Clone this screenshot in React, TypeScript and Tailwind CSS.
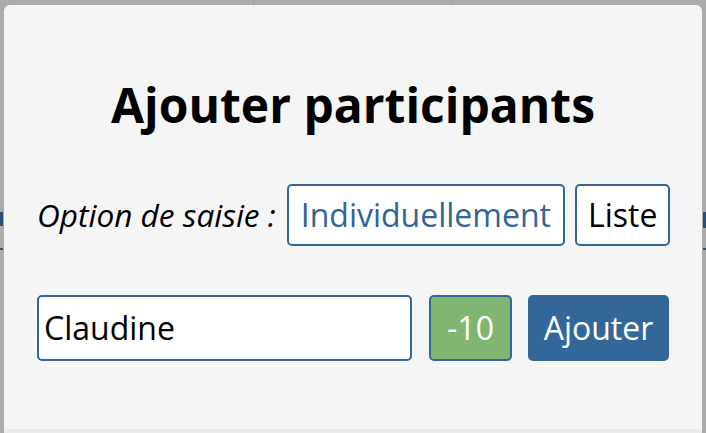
import React from "react";

export default function App() {
  return (
    <div className="relative h-[433px] w-[706px] overflow-hidden bg-[#ababab] pt-[5px] px-[4px]" style={{ fontFamily: "'Open Sans', sans-serif" }}>
      <div className="absolute left-[253px] top-0 h-[5px] w-[1px] bg-[#9e9e9e]" />
      <div className="absolute left-[452px] top-0 h-[5px] w-[1px] bg-[#9e9e9e]" />
      <div className="absolute left-0 top-[212px] h-[14px] w-[3px] bg-[#2a4f78]" />
      <div className="absolute left-0 top-[248px] h-[2px] w-[3px] bg-[#2a4f78]" />
      <div className="absolute right-0 top-[212px] h-[16px] w-[3px] bg-[#2a4f78]" />
      <div className="absolute right-0 top-[248px] h-[2px] w-[3px] bg-[#2a4f78]" />
      <div className="relative flex h-full flex-col rounded-t-[6px] bg-[#f5f5f5]">
        <div className="flex h-[424px] flex-col px-[33px]">
          <h1 className="mt-[67px] text-center text-[48px] font-bold leading-[65px] text-black">
            Ajouter participants
          </h1>
          <div className="mt-[47px] flex items-center whitespace-nowrap">
            <span className="shrink-0 text-[31.6px] italic text-black">Option de saisie :</span>
            <button className="ml-[11px] h-[62px] shrink-0 rounded-[5px] border-2 border-[#336699] bg-white px-[12px] text-[32px] text-[#2f6598]">
              Individuellement
            </button>
            <button className="ml-[10px] h-[62px] shrink-0 rounded-[5px] border-2 border-[#336699] bg-white px-[11px] text-[32px] text-black">
              Liste
            </button>
          </div>
          <div className="mt-[49px] flex items-center">
            <div className="flex h-[66px] w-[375px] items-center rounded-[5px] border-2 border-[#336699] bg-white px-[5px] text-[32px] text-black">
              Claudine
            </div>
            <button className="ml-[17px] h-[66px] w-[83px] rounded-[5px] border-2 border-[#336699] bg-[#80b672] text-[32px] text-white">
              -10
            </button>
            <button className="ml-[16px] h-[66px] w-[141px] rounded-[5px] bg-[#336699] text-[32px] text-white">
              Ajouter
            </button>
          </div>
        </div>
        <div className="flex-1 bg-[#ebebeb]" />
      </div>
    </div>
  );
}
